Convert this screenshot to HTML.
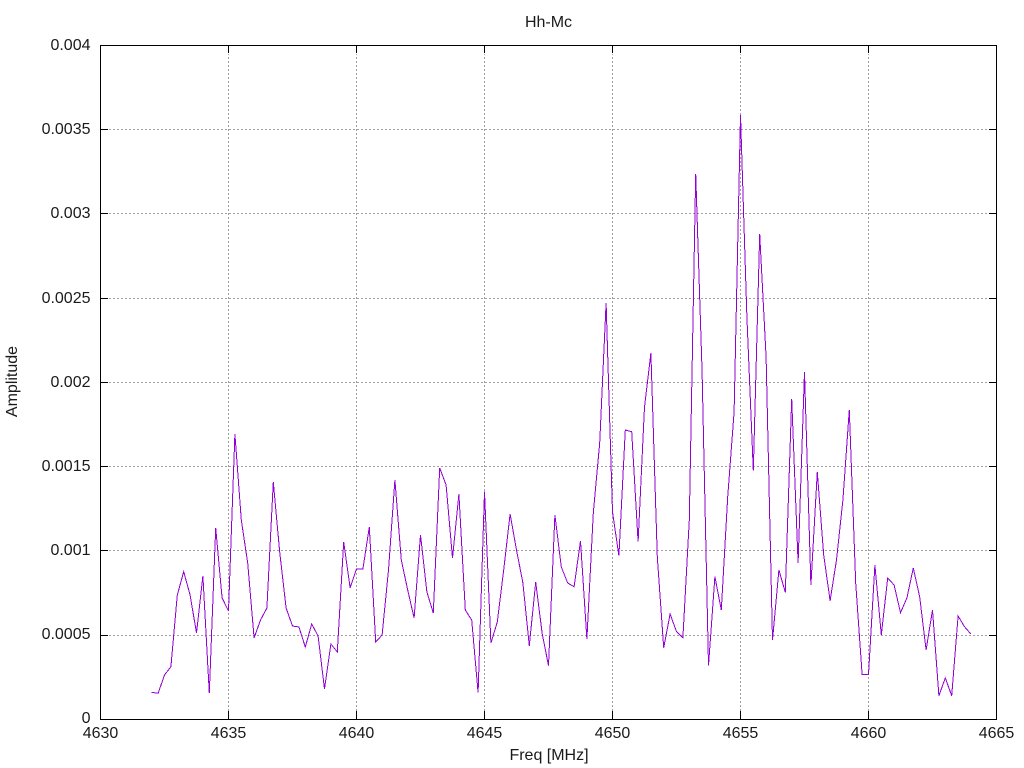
<!DOCTYPE html>
<html>
<head>
<meta charset="utf-8">
<title>Hh-Mc</title>
<style>
html,body{margin:0;padding:0;background:#fff;width:1024px;height:768px;overflow:hidden}
svg{display:block}
text{font-family:"Liberation Sans",sans-serif;font-size:16px;fill:#1a1a1a}
</style>
</head>
<body>
<svg width="1024" height="768" viewBox="0 0 1024 768" xmlns="http://www.w3.org/2000/svg">
<rect width="1024" height="768" fill="#fff"/>
<g stroke="#a0a0a0" stroke-width="1" stroke-dasharray="2 2" fill="none" shape-rendering="crispEdges">
<path d="M109 635.5H988M109 550.5H988M109 466.5H988M109 382.5H988M109 298.5H988M109 213.5H988M109 129.5H988"/>
<path d="M228.5 711V54M356.5 711V54M484.5 711V54M612.5 711V54M740.5 711V54M868.5 711V54"/>
</g>
<g stroke="#000" stroke-width="1" fill="none" shape-rendering="crispEdges">
<path d="M100.5 45.5H996.5V719.5H100.5Z"/>
<path d="M100 635.5h8M100 550.5h8M100 466.5h8M100 382.5h8M100 298.5h8M100 213.5h8M100 129.5h8"/>
<path d="M997 635.5h-8M997 550.5h-8M997 466.5h-8M997 382.5h-8M997 298.5h-8M997 213.5h-8M997 129.5h-8"/>
<path d="M228.5 719v-8M356.5 719v-8M484.5 719v-8M612.5 719v-8M740.5 719v-8M868.5 719v-8"/>
<path d="M228.5 45v8M356.5 45v8M484.5 45v8M612.5 45v8M740.5 45v8M868.5 45v8"/>
</g>
<polyline fill="none" stroke="#9400d3" stroke-width="1" shape-rendering="crispEdges" points="151.7,692.3 158.1,693.3 164.5,675 170.9,666.7 177.3,595 183.7,571.7 190.1,595 196.5,633 202.9,576 209.3,693 215.7,528 222.1,598 228.5,611 234.9,434 241.3,520 247.7,563 254.1,638 260.5,620 266.9,608 273.3,482 279.7,552 286.1,608 292.5,626 298.9,627 305.3,647 311.7,624 318.1,636 324.5,689 330.9,644 337.3,652 343.7,542 350.1,587.7 356.5,569 362.9,569 369.3,527 375.7,642 382.1,635 388.5,570 394.9,480 401.3,560 407.7,590 414.1,618 420.5,535 426.9,592 433.3,613 439.7,468 446.1,485 452.5,558 458.9,494 465.3,610 471.7,620 478.1,692.7 484.5,491.7 490.9,643 497.3,622 503.7,570 510.1,514 516.5,550 522.9,583 529.3,645.7 535.7,582 542.1,633 548.5,665.7 554.9,515 561.3,567 567.7,583 574.1,586.7 580.5,541 586.9,639 593.3,513 599.7,443 606.1,303 612.5,512 618.9,555.7 625.3,430 631.7,431.7 638.1,541.7 644.5,407 650.9,353 657.3,557 663.7,647.7 670.1,614 676.5,631.7 682.9,637.7 689.3,520 695.7,174 702.1,372 708.5,665.7 714.9,576.7 721.3,610 727.7,497 734.1,412 740.5,115 746.9,317 753.3,470.7 759.7,234 766.1,357 772.5,640 778.9,570 785.3,592.3 791.7,399 798.1,563 804.5,372 810.9,585 817.3,472 823.7,555 830.1,600.7 836.5,560 842.9,500 849.3,410 855.7,583 862.1,674.3 868.5,674.3 874.9,565 881.3,635 887.7,578 894.1,585 900.5,612.7 906.9,598 913.3,568 919.7,597 926.1,650 932.5,610 938.9,695.7 945.3,678 951.7,695.7 958.1,616 964.5,626.7 970.9,634"/>
<text x="548.5" y="27" text-anchor="middle">Hh-Mc</text>
<g text-anchor="end">
<text x="90.5" y="723">0</text>
<text x="90.5" y="639">0.0005</text>
<text x="90.5" y="555">0.001</text>
<text x="90.5" y="471">0.0015</text>
<text x="90.5" y="387">0.002</text>
<text x="90.5" y="303">0.0025</text>
<text x="90.5" y="218">0.003</text>
<text x="90.5" y="134">0.0035</text>
<text x="90.5" y="50">0.004</text>
</g>
<g text-anchor="middle">
<text x="100.5" y="738">4630</text>
<text x="228.5" y="738">4635</text>
<text x="356.5" y="738">4640</text>
<text x="484.5" y="738">4645</text>
<text x="612.5" y="738">4650</text>
<text x="740.5" y="738">4655</text>
<text x="868.5" y="738">4660</text>
<text x="996.5" y="738">4665</text>
<text x="549" y="760">Freq [MHz]</text>
</g>
<text x="0" y="0" text-anchor="middle" transform="translate(17 381.5) rotate(-90)">Amplitude</text>
</svg>
</body>
</html>
